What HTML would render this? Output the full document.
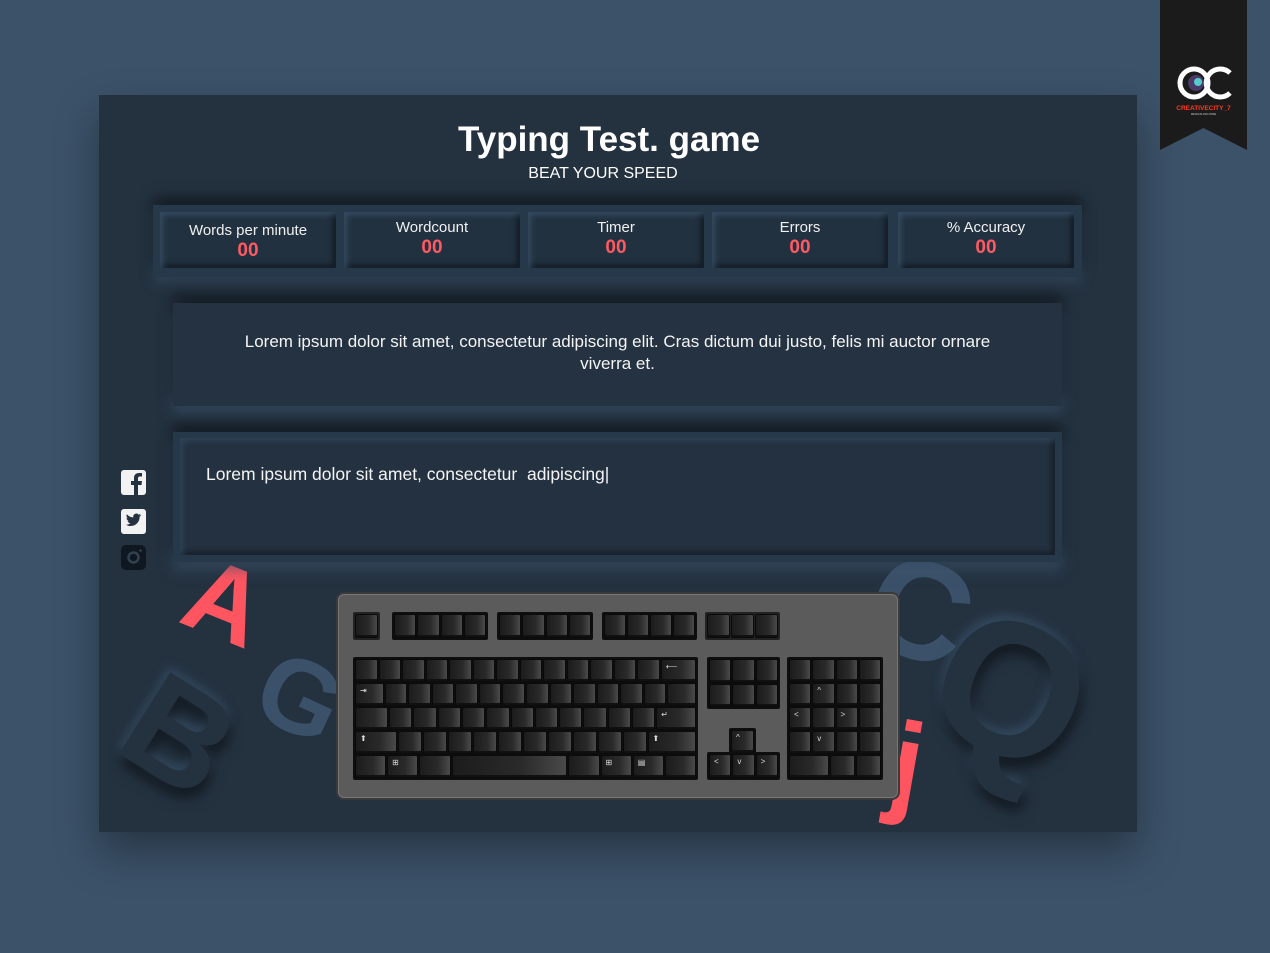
<!DOCTYPE html>
<html><head><meta charset="utf-8"><style>
*{margin:0;padding:0;box-sizing:border-box}
body{width:1270px;height:953px;background:#3c5269;position:relative;overflow:hidden;font-family:"Liberation Sans",sans-serif;color:#f0f0f0}
.panel{position:absolute;left:99px;top:95px;width:1038px;height:737px;background:#243240;box-shadow:0 20px 40px rgba(0,0,0,.35);overflow:hidden}
.abs{position:absolute}
h1{position:absolute;left:0;width:1218px;top:120px;text-align:center;font-size:35px;font-weight:bold;color:#fff}
.sub{position:absolute;left:0;width:1206px;top:165px;text-align:center;font-size:16px;color:#fff}
.bar{position:absolute;left:153px;top:205px;width:929px;height:72px;background:#26394a;box-shadow:0 -8px 14px rgba(0,0,0,.45),0 6px 10px rgba(60,85,110,.5)}
.cell{position:absolute;top:7px;width:176px;height:56px;background:#223140;box-shadow:inset 3px 3px 6px rgba(70,100,130,.55),inset -3px -3px 6px rgba(0,0,0,.5);text-align:center;font-size:15px;padding-top:7px}
.cell b{display:block;color:#ff5a62;font-size:19px;margin-top:1px}
.box{position:absolute;background:#243241;box-shadow:0 -8px 14px rgba(0,0,0,.45),0 8px 12px rgba(60,85,110,.6)}
.txt{font-size:17.5px;color:#f4f4f4}
.kb{position:absolute;left:336px;top:592px;width:564px;height:208px;background:#5b5b5b;border:2px solid #3a3a3a;border-radius:8px;box-shadow:inset 0 0 0 1px #777}
.grp{position:absolute;background:#0e0e0e;border-radius:2px;padding:2px;display:flex;flex-direction:column;gap:1px}
.row{display:flex;gap:1px;flex:1}
.k{flex:1;background:linear-gradient(90deg,#1c1c1c,#2a2a2a 60%,#4a4a4a);border:1px solid #0a0a0a;border-radius:2px;box-shadow:inset 0 -2px 0 #111;color:#ddd;font-size:8px;padding:2px 4px}
.let{position:absolute;font-weight:bold;font-family:"Liberation Sans",sans-serif;line-height:1}
</style></head><body>
<div class="panel">
 <div class="let" style="left:30px;top:570px;font-size:140px;color:#243240;transform:rotate(32deg);text-shadow:6px 8px 14px rgba(0,0,0,.5),-4px -4px 10px rgba(70,100,130,.5)">B</div>
 <div class="let" style="left:160px;top:550px;font-size:105px;color:#3b5169;transform:rotate(25deg)">G</div>
 <div class="let" style="left:88px;top:455px;font-size:105px;color:#ff5560;transform:rotate(22deg)">A</div>
 <div class="let" style="left:770px;top:445px;font-size:140px;color:#3b5169;transform:rotate(20deg)">C</div>
 <div class="let" style="left:838px;top:500px;font-size:190px;color:#243240;transform:rotate(25deg);text-shadow:6px 8px 14px rgba(0,0,0,.5),-4px -4px 10px rgba(70,100,130,.5)">Q</div>
 <div class="let" style="left:792px;top:612px;font-size:115px;color:#ff5560;transform:rotate(10deg)">j</div>
</div>
<h1>Typing Test. game</h1>
<div class="sub">BEAT YOUR SPEED</div>
<div class="bar">
 <div class="cell" style="left:7px;padding-top:10px">Words per minute<b>00</b></div>
 <div class="cell" style="left:191px">Wordcount<b>00</b></div>
 <div class="cell" style="left:375px">Timer<b>00</b></div>
 <div class="cell" style="left:559px">Errors<b>00</b></div>
 <div class="cell" style="left:745px">% Accuracy<b>00</b></div>
</div>
<div class="box" style="left:173px;top:303px;width:889px;height:103px;text-align:center;padding-top:28px"><div class="txt" style="line-height:22px;padding:0 48px;font-size:17px">Lorem ipsum dolor sit amet, consectetur adipiscing elit. Cras dictum dui justo, felis mi auctor ornare viverra et.</div></div>
<div class="box" style="left:173px;top:432px;width:889px;height:130px;background:#26394a">
 <div class="abs" style="left:7px;top:6px;width:875px;height:117px;background:#233140;box-shadow:inset 3px 3px 6px rgba(70,100,130,.4),inset -3px -3px 6px rgba(0,0,0,.4);padding:26px 0 0 26px"><span class="txt">Lorem ipsum dolor sit amet, consectetur &nbsp;adipiscing|</span></div>
</div>
<svg class="abs" style="left:121px;top:470px" width="25" height="100" viewBox="0 0 25 100">
 <rect x="0" y="0" width="25" height="25" rx="3" fill="#f2f2f2"/>
 <path d="M17 25V15h3.5l.5-4h-4V8.5c0-1.2.4-2 2-2h2V3h-3c-3 0-5 1.8-5 5V11h-3v4h3v10z" fill="#243240"/>
 <rect x="0" y="39" width="25" height="25" rx="3" fill="#f2f2f2"/>
 <path d="M20 45c-.6.3-1.2.4-1.8.5.7-.4 1.1-1 1.4-1.7-.6.4-1.3.6-2 .8a3.1 3.1 0 0 0-5.3 2.8c-2.6-.1-4.9-1.4-6.4-3.2-.8 1.4-.4 3.200 1 4.1-.5 0-1-.2-1.4-.4 0 1.5 1.1 2.8 2.5 3.1-.5.1-.9.2-1.4.1.4 1.2 1.6 2.1 2.9 2.2-1.3 1-3 1.5-4.6 1.3 1.4.9 3.1 1.4 4.8 1.4 5.8 0 9-4.8 8.9-9.2.6-.4 1.1-1 1.5-1.6z" fill="#243240"/>
 <rect x="0" y="75" width="25" height="25" rx="5" fill="#0f1720"/>
 <circle cx="12.5" cy="87.5" r="5" fill="none" stroke="#33414f" stroke-width="2.5"/>
 <circle cx="19.5" cy="80.5" r="1.3" fill="#33414f"/>
</svg>
<svg class="abs" style="left:1160px;top:0" width="87" height="151" viewBox="0 0 87 151">
 <path d="M0 0H87V150L43.5 128L0 150Z" fill="#1b1b1b"/>
 <circle cx="34" cy="83" r="14" fill="none" stroke="#fff" stroke-width="5"/>
 <circle cx="36" cy="83" r="8" fill="#4a3a6a"/>
 <circle cx="38" cy="82" r="4" fill="#5cc"/>
 <path d="M70 73a14 14 0 1 0 0 20" fill="none" stroke="#fff" stroke-width="5"/>
 <text x="43.5" y="110" text-anchor="middle" font-size="6.5" font-weight="bold" fill="#ff3b1f" font-family="Liberation Sans">CREATIVECITY_7</text>
 <text x="43.5" y="115" text-anchor="middle" font-size="2.5" fill="#ccc" font-family="Liberation Sans">DESIGNS AND MORE</text>
</svg>
<div class="kb"></div>
<div class="grp" style="left:353px;top:612px;width:27px;height:28px;background:#222"><div class="row"><div class="k"></div></div></div>
<div class="grp" style="left:392px;top:612px;width:96px;height:28px"><div class="row"><div class="k"></div><div class="k"></div><div class="k"></div><div class="k"></div></div></div>
<div class="grp" style="left:497px;top:612px;width:96px;height:28px"><div class="row"><div class="k"></div><div class="k"></div><div class="k"></div><div class="k"></div></div></div>
<div class="grp" style="left:602px;top:612px;width:95px;height:28px"><div class="row"><div class="k"></div><div class="k"></div><div class="k"></div><div class="k"></div></div></div>
<div class="grp" style="left:705px;top:612px;width:75px;height:28px;background:#222"><div class="row"><div class="k"></div><div class="k"></div><div class="k"></div></div></div>
<div class="grp" style="left:353px;top:657px;width:345px;height:123px">
 <div class="row"><div class="k"></div><div class="k"></div><div class="k"></div><div class="k"></div><div class="k"></div><div class="k"></div><div class="k"></div><div class="k"></div><div class="k"></div><div class="k"></div><div class="k"></div><div class="k"></div><div class="k"></div><div class="k" style="flex:2">⟵</div></div>
 <div class="row"><div class="k" style="flex:1.5">⇥</div><div class="k"></div><div class="k"></div><div class="k"></div><div class="k"></div><div class="k"></div><div class="k"></div><div class="k"></div><div class="k"></div><div class="k"></div><div class="k"></div><div class="k"></div><div class="k"></div><div class="k" style="flex:1.5"></div></div>
 <div class="row"><div class="k" style="flex:1.75"></div><div class="k"></div><div class="k"></div><div class="k"></div><div class="k"></div><div class="k"></div><div class="k"></div><div class="k"></div><div class="k"></div><div class="k"></div><div class="k"></div><div class="k"></div><div class="k" style="flex:2.25">↵</div></div>
 <div class="row"><div class="k" style="flex:2.25">⬆</div><div class="k"></div><div class="k"></div><div class="k"></div><div class="k"></div><div class="k"></div><div class="k"></div><div class="k"></div><div class="k"></div><div class="k"></div><div class="k"></div><div class="k" style="flex:2.75">⬆</div></div>
 <div class="row"><div class="k" style="flex:1.25"></div><div class="k" style="flex:1.25">⊞</div><div class="k" style="flex:1.25"></div><div class="k" style="flex:6.25"></div><div class="k" style="flex:1.25"></div><div class="k" style="flex:1.25">⊞</div><div class="k" style="flex:1.25">▤</div><div class="k" style="flex:1.25"></div></div>
</div>
<div class="grp" style="left:707px;top:657px;width:73px;height:52px">
 <div class="row"><div class="k"></div><div class="k"></div><div class="k"></div></div>
 <div class="row"><div class="k"></div><div class="k"></div><div class="k"></div></div>
</div>
<div class="grp" style="left:729px;top:728px;width:27px;height:27px"><div class="row"><div class="k">^</div></div></div>
<div class="grp" style="left:707px;top:752px;width:73px;height:28px"><div class="row"><div class="k">&lt;</div><div class="k">v</div><div class="k">&gt;</div></div></div>
<div class="grp" style="left:787px;top:657px;width:96px;height:123px">
 <div class="row"><div class="k"></div><div class="k"></div><div class="k"></div><div class="k"></div></div>
 <div class="row"><div class="k"></div><div class="k">^</div><div class="k"></div><div class="k"></div></div>
 <div class="row"><div class="k">&lt;</div><div class="k"></div><div class="k">&gt;</div><div class="k"></div></div>
 <div class="row"><div class="k"></div><div class="k">v</div><div class="k"></div><div class="k"></div></div>
 <div class="row"><div class="k" style="flex:2"></div><div class="k"></div><div class="k"></div></div>
</div>
</body></html>
